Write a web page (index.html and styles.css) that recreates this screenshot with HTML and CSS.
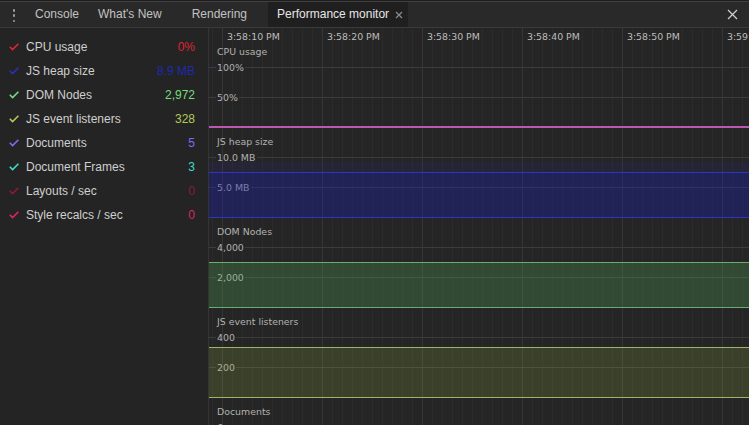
FILE: index.html
```html
<!DOCTYPE html>
<html>
<head>
<meta charset="utf-8">
<title>Performance monitor</title>
<link rel="stylesheet" href="styles.css">
</head>
<body>
<div class="app">
  <div class="topline"></div>
  <div class="toolbar">
    <div class="kebab"><span></span><span></span><span></span></div>
    <div class="tab tab-first">Console</div>
    <div class="tab">What's New<span class="tab-close is-hidden"></span></div>
    <div class="tab">Rendering<span class="tab-close is-hidden"></span></div>
    <div class="tab is-selected">Performance monitor<span class="tab-close"><svg width="8" height="8" viewBox="0 0 8 8"><path d="M1 1L7 7M7 1L1 7" stroke="#8c8c8c" stroke-width="1.2" fill="none"/></svg></span></div>
    <div class="spacer"></div>
    <div class="close-btn"><svg width="11" height="11" viewBox="0 0 11 11"><path d="M1 1L10 10M10 1L1 10" stroke="#cdcdcd" stroke-width="1.3" fill="none"/></svg></div>
  </div>
  <div class="main">
    <div class="sidebar">
      <div class="metric m-cpu"><svg class="check" width="10" height="8" viewBox="0 0 10 8"><path d="M0.8 3.8L3.6 6.6L9.4 0.8"/></svg><span class="metric-label">CPU usage</span><span class="metric-value">0%</span></div>
      <div class="metric m-heap"><svg class="check" width="10" height="8" viewBox="0 0 10 8"><path d="M0.8 3.8L3.6 6.6L9.4 0.8"/></svg><span class="metric-label">JS heap size</span><span class="metric-value">8.9 MB</span></div>
      <div class="metric m-dom"><svg class="check" width="10" height="8" viewBox="0 0 10 8"><path d="M0.8 3.8L3.6 6.6L9.4 0.8"/></svg><span class="metric-label">DOM Nodes</span><span class="metric-value">2,972</span></div>
      <div class="metric m-listeners"><svg class="check" width="10" height="8" viewBox="0 0 10 8"><path d="M0.8 3.8L3.6 6.6L9.4 0.8"/></svg><span class="metric-label">JS event listeners</span><span class="metric-value">328</span></div>
      <div class="metric m-docs"><svg class="check" width="10" height="8" viewBox="0 0 10 8"><path d="M0.8 3.8L3.6 6.6L9.4 0.8"/></svg><span class="metric-label">Documents</span><span class="metric-value">5</span></div>
      <div class="metric m-frames"><svg class="check" width="10" height="8" viewBox="0 0 10 8"><path d="M0.8 3.8L3.6 6.6L9.4 0.8"/></svg><span class="metric-label">Document Frames</span><span class="metric-value">3</span></div>
      <div class="metric m-layouts"><svg class="check" width="10" height="8" viewBox="0 0 10 8"><path d="M0.8 3.8L3.6 6.6L9.4 0.8"/></svg><span class="metric-label">Layouts / sec</span><span class="metric-value">0</span></div>
      <div class="metric m-style"><svg class="check" width="10" height="8" viewBox="0 0 10 8"><path d="M0.8 3.8L3.6 6.6L9.4 0.8"/></svg><span class="metric-label">Style recalcs / sec</span><span class="metric-value">0</span></div>
    </div>
    <div class="chart">
      <div class="axis">
        <span class="time">3:58:10 PM</span>
        <span class="time">3:58:20 PM</span>
        <span class="time">3:58:30 PM</span>
        <span class="time">3:58:40 PM</span>
        <span class="time">3:58:50 PM</span>
        <span class="time">3:59:00 PM</span>
      </div>

      <div class="pane">
        <div class="pane-title">CPU usage</div>
        <div class="plot">
          <div class="ticks">
            <div class="tick"><span class="tick-label">100%</span></div>
            <div class="tick"><span class="tick-label">50%</span></div>
            <div class="tick tick-zero"></div>
          </div>
          <div class="series">
            <div class="stroke s-cpu" style="margin-top:66px"></div>
          </div>
        </div>
      </div>

      <div class="pane">
        <div class="pane-title">JS heap size</div>
        <div class="plot">
          <div class="ticks">
            <div class="tick"><span class="tick-label">10.0 MB</span></div>
            <div class="tick"><span class="tick-label">5.0 MB</span></div>
            <div class="tick tick-zero"></div>
          </div>
          <div class="series">
            <div class="band s-heap-total" style="margin-top:12px;height:10px"></div>
            <div class="area s-heap" style="height:46px"></div>
          </div>
        </div>
      </div>

      <div class="pane">
        <div class="pane-title">DOM Nodes</div>
        <div class="plot">
          <div class="ticks">
            <div class="tick"><span class="tick-label">4,000</span></div>
            <div class="tick"><span class="tick-label">2,000</span></div>
            <div class="tick tick-zero"></div>
          </div>
          <div class="series">
            <div class="area s-dom" style="margin-top:22px;height:46px"></div>
          </div>
        </div>
      </div>

      <div class="pane">
        <div class="pane-title">JS event listeners</div>
        <div class="plot">
          <div class="ticks">
            <div class="tick"><span class="tick-label">400</span></div>
            <div class="tick"><span class="tick-label">200</span></div>
            <div class="tick tick-zero"></div>
          </div>
          <div class="series">
            <div class="area s-listeners" style="margin-top:17px;height:51px"></div>
          </div>
        </div>
      </div>

      <div class="pane">
        <div class="pane-title">Documents</div>
        <div class="plot">
          <div class="ticks">
            <div class="tick"><span class="tick-label">6</span></div>
            <div class="tick"><span class="tick-label">3</span></div>
            <div class="tick tick-zero"></div>
          </div>
        </div>
      </div>
    </div>
  </div>
</div>
</body>
</html>
```

FILE: styles.css
```css
html, body {
  margin: 0;
  padding: 0;
}

body {
  width: 749px;
  height: 425px;
  overflow: hidden;
  background: #242424;
  font-family: "Liberation Sans", Arial, sans-serif;
  font-size: 12px;
  color: #d0d0d0;
}

.app {
  display: flex;
  flex-direction: column;
  height: 425px;
}

.topline {
  height: 1px;
  background: #1d1d1d;
  border-bottom: 1px solid #414141;
  flex-shrink: 0;
}

.toolbar {
  display: flex;
  align-items: stretch;
  height: 25px;
  background: #292929;
  border-bottom: 1px solid #3a3a3a;
  flex-shrink: 0;
}

.kebab {
  width: 26px;
  display: flex;
  flex-direction: column;
  align-items: center;
  gap: 2.8px;
  padding-top: 7px;
  padding-left: 2px;
  box-sizing: border-box;
}

.kebab span {
  width: 2.6px;
  height: 2.6px;
  border-radius: 50%;
  background: #9d9d9d;
}

.tab {
  display: flex;
  align-items: center;
  padding: 0 9px;
  line-height: 25px;
  color: #c2c2c2;
  white-space: nowrap;
}

.tab-first {
  padding-right: 10px;
}

.tab.is-selected {
  background: #1f1f1f;
  color: #e6e6e6;
  padding-right: 5px;
}

.tab-close {
  width: 8px;
  height: 8px;
  margin-left: 6px;
  display: flex;
}

.tab-close.is-hidden {
  visibility: hidden;
  margin-right: -2px;
}

.spacer {
  flex: 1;
}

.close-btn {
  width: 11px;
  display: flex;
  align-items: center;
  padding-right: 11px;
  padding-left: 4px;
}

.main {
  flex: 1;
  display: flex;
  min-height: 0;
}

.sidebar {
  width: 208px;
  flex-shrink: 0;
  background: #242424;
  border-right: 1px solid #353535;
  padding-top: 7px;
  box-sizing: content-box;
}

.metric {
  display: flex;
  align-items: center;
  height: 24px;
  padding: 0 13px 0 9px;
}

.check {
  margin-right: 7px;
  flex-shrink: 0;
}

.check path {
  fill: none;
  stroke: currentColor;
  stroke-width: 1.6;
}

.metric-label {
  flex: 1;
  color: #cfcfcf;
  white-space: nowrap;
}

.metric-value {
  text-align: right;
}

.m-cpu { color: #df2632; }
.m-heap { color: #2633b8; }
.m-dom { color: #74dd7c; }
.m-listeners { color: #b3c95b; }
.m-docs { color: #7a6cf0; }
.m-frames { color: #3fdcca; }
.m-layouts { color: #8c1a3c; }
.m-style { color: #dd2469; }

.m-heap .metric-value { color: #1d2ab0; }

.chart {
  flex: 1;
  min-width: 0;
  overflow: hidden;
  display: flex;
  flex-direction: column;
  background-color: #252525;
  background-image:
    repeating-linear-gradient(to right, transparent 0 13px, #363636 13px 14px, transparent 14px 100px),
    repeating-linear-gradient(to right, transparent 0 3px, #2b2b2b 3px 4px, transparent 4px 10px);
  font-family: "DejaVu Sans", Verdana, sans-serif;
  font-size: 9.4px;
  color: #b2b2b2;
}

.axis {
  height: 16px;
  line-height: 18px;
  padding-left: 18px;
  display: flex;
  white-space: nowrap;
  flex-shrink: 0;
  color: #bdbdbd;
}

.time {
  width: 100px;
  flex-shrink: 0;
}

.pane {
  height: 90px;
  flex-shrink: 0;
  display: flex;
  flex-direction: column;
}

.pane-title {
  height: 16px;
  line-height: 16px;
  padding-left: 8px;
  white-space: nowrap;
  flex-shrink: 0;
}

.plot {
  height: 74px;
  display: grid;
  flex-shrink: 0;
}

.ticks,
.series {
  grid-area: 1 / 1;
  display: flex;
  flex-direction: column;
  min-width: 0;
}

.ticks {
  gap: 15px;
}

.tick {
  height: 15px;
  flex-shrink: 0;
  display: flex;
  align-items: center;
  line-height: 15px;
  white-space: nowrap;
}

.tick::before {
  content: "";
  width: 7px;
  height: 1px;
  background: #3c3c3c;
  flex-shrink: 0;
}

.tick::after {
  content: "";
  flex: 1;
  height: 1px;
  background: #3c3c3c;
}

.tick-label {
  padding: 0 1.5px 0 1px;
}

.stroke {
  height: 2px;
  flex-shrink: 0;
}

.s-cpu {
  background: #bb58b2;
}

.band,
.area {
  flex-shrink: 0;
  box-sizing: border-box;
}

.s-heap-total {
  background: rgba(40, 40, 130, 0.2);
}

.s-heap {
  background: rgba(30, 34, 168, 0.38);
  border-top: 1px solid #2b37c4;
  border-bottom: 1px solid #2b37c4;
}

.s-dom {
  background: rgba(84, 170, 92, 0.27);
  border-top: 1px solid #6aae6f;
  border-bottom: 1px solid #6aae6f;
}

.s-listeners {
  background: rgba(150, 176, 64, 0.2);
  border-top: 1px solid #a3b26a;
  border-bottom: 1px solid #a3b26a;
}
```
